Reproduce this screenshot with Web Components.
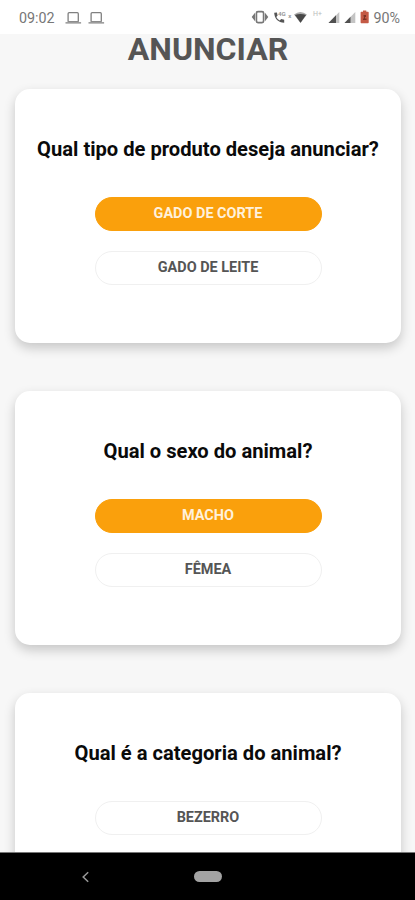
<!DOCTYPE html>
<html lang="pt-BR">
<head>
<meta charset="utf-8">
<title>Anunciar</title>
<style>
html,body{margin:0;height:100%;overflow:hidden}
body{font-family:Roboto,"Liberation Sans",sans-serif;background:#f7f7f7}
</style>
</head>
<body>
<phone-screen>
  <status-bar slot="top" time="09:02" battery="90%"></status-bar>
  <page-title>ANUNCIAR</page-title>
  <question-card>
    <span slot="question">Qual tipo de produto deseja anunciar?</span>
    <option-pill selected>GADO DE CORTE</option-pill>
    <option-pill>GADO DE LEITE</option-pill>
  </question-card>
  <question-card>
    <span slot="question">Qual o sexo do animal?</span>
    <option-pill selected>MACHO</option-pill>
    <option-pill>FÊMEA</option-pill>
  </question-card>
  <question-card>
    <span slot="question">Qual é a categoria do animal?</span>
    <option-pill>BEZERRO</option-pill>
  </question-card>
  <nav-bar slot="bottom"></nav-bar>
</phone-screen>
<script>
function define(name, html) {
  customElements.define(name, class extends HTMLElement {
    constructor() {
      super();
      const t = document.createElement('template');
      t.innerHTML = html;
      this.attachShadow({mode: 'open'}).append(t.content.cloneNode(true));
      for (const el of this.shadowRoot.querySelectorAll('[data-attr]'))
        el.textContent = this.getAttribute(el.dataset.attr);
    }
  });
}

define('phone-screen', `
<style>
:host{display:flex;flex-direction:column;width:415px;height:900px;overflow:hidden;background:#f7f7f7}
main{flex:1;min-height:0;overflow:hidden;display:flex;flex-direction:column;align-items:center}
</style>
<slot name="top"></slot><main><slot></slot></main><slot name="bottom"></slot>`);

define('page-title', `
<style>
:host{display:block;flex:none;height:55px;line-height:30px;font-size:32px;font-weight:700;color:#555;white-space:nowrap;padding-left:1px}
</style><slot></slot>`);

define('question-card', `
<style>
:host{display:flex;flex:none;flex-direction:column;align-items:center;box-sizing:border-box;width:386px;height:254px;margin:0 0 48.2px 1px;padding-top:46px;border-radius:15px;background:#fff;box-shadow:0 5px 12px rgba(0,0,0,.2)}
h2{margin:0 0 36px;height:26px;line-height:28px;font-size:20.15px;font-weight:700;color:#0a0a0a;white-space:nowrap}
div{display:flex;flex-direction:column;gap:20px}
</style><h2><slot name="question"></slot></h2><div><slot></slot></div>`);

define('option-pill', `
<style>
:host{display:flex;justify-content:center;box-sizing:border-box;width:227px;height:34px;border:1px solid #f0f0f0;border-radius:17px;background:#fff;color:#555;font-size:14.45px;font-weight:700;line-height:31px}
:host([selected]){background:#faa00c;border-color:#faa00c;color:#fff1dc}
</style><slot></slot>`);

define('status-bar', `
<style>
:host{display:flex;flex:none;align-items:center;box-sizing:border-box;height:34px;padding:2px 15px 0 19px;background:#fff;color:#777;font-size:14.3px;line-height:16px}
svg{display:block;flex:none}
.grow{flex:1}
</style>
<span data-attr="time"></span>
<svg style="margin-left:10px" width="40" height="16" viewBox="0 0 40 16" fill="none" stroke="#808080" stroke-width="1.3">
 <path d="M3.100 11V3.700q0-1 1-1h8.200q1 0 1 1V11M.5 12.800h15.600M26.100 11V3.700q0-1 1-1h8.200q1 0 1 1V11M23.500 12.800h15.600"/>
 <path d="M2.500 11.600h11.400M25.500 11.600h11.400" stroke-width="1"/>
</svg>
<span class="grow"></span>
<svg width="120" height="20" viewBox="251 8 120 20">
 <rect x="256.4" y="11.6" width="7.200" height="11" rx="1.600" fill="#fff" stroke="#777" stroke-width="1.700"/>
 <path d="M255 12.700v8.600l-3.300-4.300zM265 12.700v8.600l3.300-4.300z" fill="#777"/>
 <path d="M274.200 12.700c.2 5.800 4.100 9.900 10 10.100v-3l-3-.8-1.500 1.400q-2.400-1.200-3.400-3.500l1.300-1.400-.7-2.900z" fill="#555"/>
 <text x="278" y="16.300" font-size="6.200" font-weight="700" fill="#999">4G</text>
 <text x="288.200" y="18" font-size="6" font-weight="700" fill="#999">x</text>
 <path d="M294 14.400q6.400-5 12.900 0L300.500 23z" fill="#aaa"/>
 <path d="M295 15q5.500-2.200 11 0L300.500 22.700z" fill="#484848"/>
 <text x="313" y="16" font-size="7" fill="#bbb">H+</text>
 <path d="M328.500 23L339.300 12v11z" fill="#c4c4c4"/><path d="M328.500 23L336 15.300V23z" fill="#505050"/>
 <path d="M344.500 23L355.300 12v11z" fill="#c4c4c4"/><path d="M344.500 23L350.500 16.800V23z" fill="#505050"/>
 <path d="M363 10.500h3.300v1.300h1.700q.7 0 .7.700v10q0 .8-.7.800h-6.700q-.7 0-.7-.8v-10q0-.7.7-.7h1.700z" fill="#c45a45"/>
 <path d="M363.500 15h2.500v2h-1v1.500h1.500v1.500h-3.500v-1.500h1z" fill="#7d3325"/>
</svg>
<span style="margin-left:2px" data-attr="battery"></span>`);

define('nav-bar', `
<style>
:host{display:grid;grid-template-columns:80px 114px 28px;align-items:center;flex:none;box-sizing:border-box;height:48px;border-top:1px solid #777;background:#000}
svg{display:block}
i{display:block;width:28px;height:11px;border-radius:6px;background:#a3a3a3}
</style>
<span></span>
<svg width="11" height="12" viewBox="0 0 11 12"><path d="M8.200 1.300L3.200 6l5 4.700" fill="none" stroke="#999" stroke-width="1.500"/></svg>
<i></i>`);
</script>
</body>
</html>
